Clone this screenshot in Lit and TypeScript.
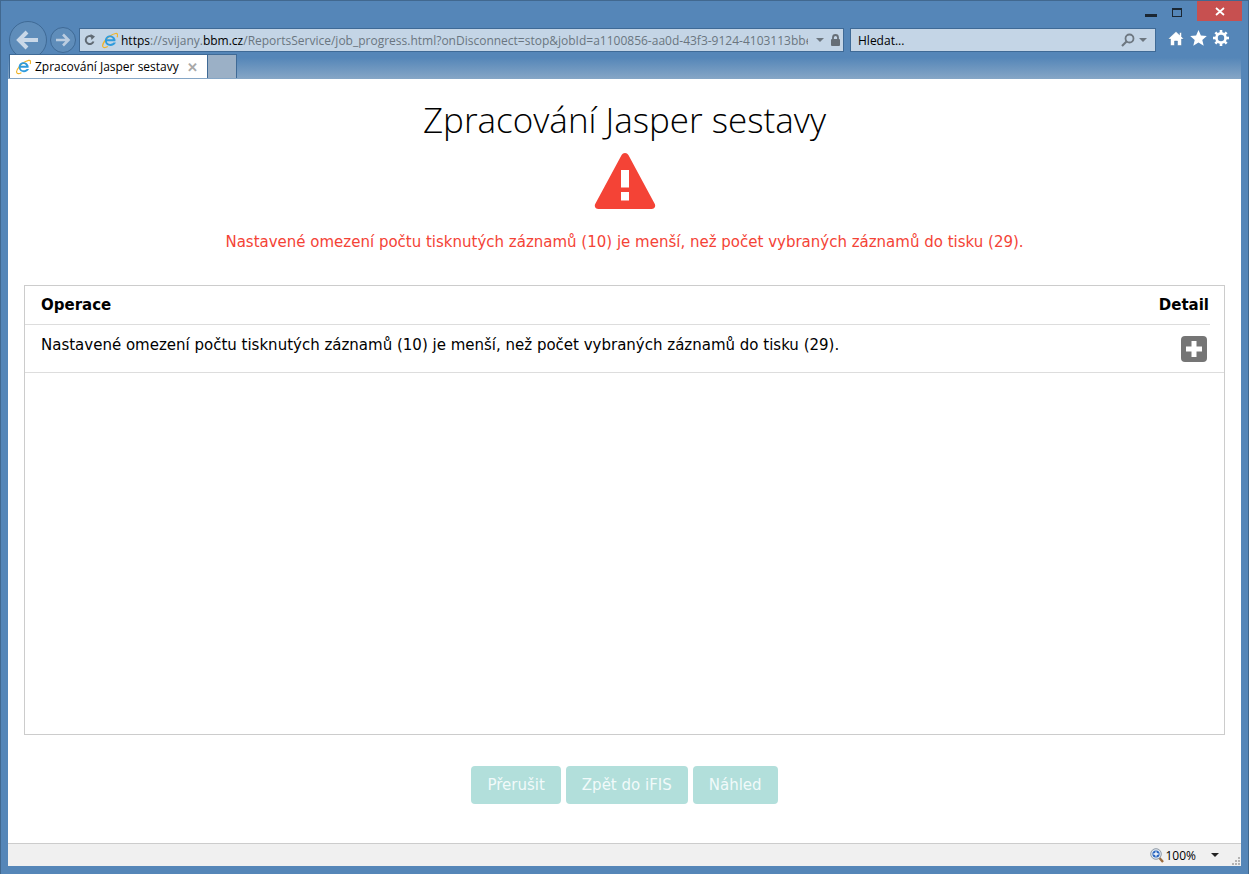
import { LitElement, html, css, svg } from "lit";
import { customElement } from "lit/decorators.js";

const ieLogo = (s: number) => html`<svg width=${s} height=${s} viewBox="0 0 18 18" class="ie">
  <path d="M2.2 15.6C.2 13.2 7 3.6 15.4 1.6c2.2-.4 2.8 1.4 1.6 4" fill="none" stroke="#f0b429" stroke-width="1.3"/>
  <path d="M2.2 15.6c1 1.6 3.6.6 5-.2" fill="none" stroke="#f0b429" stroke-width="1.3"/>
  <path d="M14.6 9.8H6.2c.2 3 4.6 4 7 1.4h2.6c-2 5-11 5-11.6-1.6C3.6 3 13 1.600 15.200 7.600c.2.7.2 1.400 0 2.200zM6.300 7.600h6.300c-.7-2.600-5.400-2.600-6.300 0z" fill="#2f9bdc" fill-rule="evenodd"/>
</svg>`;

@customElement("app-root")
export class AppRoot extends LitElement {
  static styles = css`
    :host { display: block; width: 1249px; height: 874px; overflow: hidden; }
    * { box-sizing: border-box; }
    .window {
      width: 1249px; height: 874px; display: flex; flex-direction: column;
      background: #5586b8; border: 1px solid #41688f; border-bottom: 0;
      font-family: "Open Sans", "Noto Sans", sans-serif; padding: 0 7px 8px 7px;
    }
    .caption { height: 20px; display: flex; justify-content: flex-end; margin-right: -1px; flex: none; }
    .cap-btn { display: flex; align-items: center; justify-content: center; }
    .min { width: 27px; padding-top: 8px; }
    .max { width: 26px; padding-top: 2px; margin-right: 7px; }
    .close { width: 45px; background: #c75050; }
    .nav { height: 33px; display: flex; flex: none; align-items: flex-start; padding-left: 1px; }
    .round { display: flex; align-items: center; justify-content: center; border: 1px solid #3f6a96; border-radius: 50%; flex: none; }
    .back { width: 38px; height: 38px; margin-top: 0; background: #5f8dba; }
    .fwd { width: 26px; height: 26px; margin: 6px 3px 0 3px; background: #5f8dba; }
    .field {
      margin-top: 7px; height: 24px; background: #c4d5e6; border: 1px solid #3f6a96;
      display: flex; align-items: center; font-size: 12px; color: #000; flex: none;
    }
    .addr { width: 765px; padding: 0 2px 0 4px; }
    .addr .ie { margin: 0 3px 0 5px; flex: none; }
    .url { flex: 1; overflow: hidden; white-space: nowrap; color: #6a7580; font-size: 12px; letter-spacing: 0; }
    .url b { font-weight: 400; color: #000; }
    .dd { width: 0; height: 0; border: 4px solid transparent; border-top-color: #6d7780; border-bottom: 0; flex: none; }
    .addr .dd { margin: 0 6px 0 8px; }
    .search { width: 306px; margin-left: 6px; padding: 0 8px 0 7px; justify-content: space-between; }
    .search span { font-size: 12px; }
    .search-ico { display: flex; align-items: center; gap: 4px; }
    .tools { display: flex; gap: 6px; margin: 9px 0 0 12px; align-items: center; }
    .tabs { height: 25px; flex: none; display: flex; padding-left: 1px; position: relative;
      background: linear-gradient(#5586b8 0%, #5586b8 15%, #86a6c6 100%); margin: 0 0 0 0; }
    .tab {
      width: 199px; height: 24px; background: #fff; border: 1px solid #3f6a96; border-bottom: 0;
      display: flex; align-items: center; padding: 0 9px 0 5px; font-size: 12px; color: #000;
    }
    .tab span { flex: 1; margin-left: 4px; white-space: nowrap; }
    .tab-x { color: #a8a8a8; font-size: 13px; font-weight: 700; }
    .newtab { width: 29px; height: 24px; background: #9bb0c6; border: 1px solid #3f6a96; border-left: 0; border-bottom: 0; }
    .page { flex: 1; background: #fff; display: flex; flex-direction: column; align-items: center; min-height: 0; position: relative; }
    h1 {
      margin: 17px 0 0 0; font-family: "Open Sans", "Noto Sans", sans-serif; font-weight: 300;
      font-size: 35px; line-height: 48px; color: #000; white-space: nowrap;
    }
    .warn { display: block; margin-top: 8px; }
    .msg { margin-top: 20px; color: #f44336; font-family: "DejaVu Sans", sans-serif; font-size: 15px; line-height: 24px; white-space: nowrap; }
    .box {
      width: 1201px; margin-top: 31px; height: 450px; border: 1px solid #ccc; flex: none;
      font-family: "DejaVu Sans", sans-serif; font-size: 15px; color: #000;
    }
    .head {
      height: 39px; margin-right: 14px; padding: 0 1px 0 16px; display: flex; justify-content: space-between; align-items: center;
      border-bottom: 1px solid #ddd; font-weight: 700;
    }
    .row { height: 48px; padding: 0 17px 0 16px; display: flex; justify-content: space-between; align-items: flex-start; border-bottom: 1px solid #ddd; }
    .row span { margin-top: 10px; line-height: 20px; white-space: nowrap; }
    .plus { margin-top: 11px; display: block; }
    .btns { display: flex; gap: 5px; margin-top: 31px; }
    .btn {
      height: 38px; padding: 0 16px; border: 0; border-radius: 4px; background: #b2dfdb; color: #f1fafa;
      font-family: "DejaVu Sans", sans-serif; font-size: 15px; display: flex; align-items: center;
    }
    .status {
      height: 23px; flex: none; background: #f0f0f0; border-top: 1px solid #ccc; display: flex; align-items: center;
      justify-content: flex-end; font-size: 12px; color: #000;
    }
    .status span { margin: 0 15px 0 1px; }
    .status .dd { border-top-color: #222; margin-right: 22px; }
    .grip { position: absolute; right: 0; bottom: 0; }
    .status-wrap { position: relative; flex: none; }
  `;

  render() {
    return html`<div class="window">
      <div class="caption">
        <div class="cap-btn min"><svg width="12" height="3"><rect width="12" height="3" fill="#1b2733"/></svg></div>
        <div class="cap-btn max"><svg width="10" height="9"><rect x=".5" y=".5" width="9" height="8" fill="none" stroke="#1b2733"/><rect width="10" height="2" fill="#1b2733"/></svg></div>
        <div class="cap-btn close"><svg width="10" height="9"><path d="M1 1l8 7M9 1L1 8" stroke="#fff" stroke-width="1.800"/></svg></div>
      </div>
      <div class="nav">
        <div class="round back"><svg width="24" height="20" viewBox="0 0 24 20"><path d="M11 2L3 10l8 8M3 10h19" fill="none" stroke="#c9d8e8" stroke-width="4"/></svg></div>
        <div class="round fwd"><svg width="16" height="14" viewBox="0 0 16 14"><path d="M8 1.500L13.500 7 8 12.500M13 7H1" fill="none" stroke="#bccde0" stroke-width="2.600"/></svg></div>
        <div class="field addr">
          <svg width="12" height="12" viewBox="0 0 12 12"><path d="M9.500 7.500A4 4 0 1 1 8 2.700" fill="none" stroke="#606a74" stroke-width="2"/><path d="M6.500 0l4.500 2.500L7.500 6z" fill="#606a74"/></svg>
          ${ieLogo(17)}
          <div class="url"><b>https</b>://svijany.<b>bbm.cz</b>/ReportsService/job_progress.html?onDisconnect=stop&amp;jobId=a1100856-aa0d-43f3-9124-4103113bbef3&amp;al</div>
          <div class="dd"></div>
          <svg width="11" height="12" viewBox="0 0 11 12"><path d="M3 5V3.500a2.500 2.500 0 0 1 5 0V5" fill="none" stroke="#666e76" stroke-width="1.800"/><rect x="1" y="5" width="9" height="7" rx="1" fill="#666e76"/></svg>
        </div>
        <div class="field search">
          <span>Hledat...</span>
          <div class="search-ico">
            <svg width="14" height="14" viewBox="0 0 14 14"><circle cx="8.500" cy="5.500" r="4" fill="none" stroke="#6d7780" stroke-width="1.800"/><path d="M5.500 8.500L1 13" stroke="#6d7780" stroke-width="2.200"/></svg>
            <div class="dd"></div>
          </div>
        </div>
        <div class="tools">
          <svg width="16" height="15" viewBox="0 0 16 15"><path d="M8 .500L0 8h2.500v6.500h4V10h3v4.500h4V8H16l-2.500-2.300V1.500h-2v2.300z" fill="#fff" stroke="#3f6a96" stroke-width=".4"/></svg>
          <svg width="17" height="16" viewBox="0 0 17 16"><path d="M8.500 0l2.400 5.500 5.900.5-4.500 3.900 1.400 5.900-5.200-3.200-5.200 3.200 1.400-5.900L.2 6l5.900-.5z" fill="#fff"/></svg>
          <svg width="16" height="16" viewBox="0 0 16 16"><circle cx="8" cy="8" r="4.600" fill="none" stroke="#fff" stroke-width="2.600"/><g stroke="#fff" stroke-width="2.600">${[0, 45, 90, 135].map((a) => svg`<path d="M8 0v16" transform="rotate(${a} 8 8)"/>`)}</g><circle cx="8" cy="8" r="3.200" fill="#5586b8"/></svg>
        </div>
      </div>
      <div class="tabs">
        <div class="tab">${ieLogo(16)}<span>Zpracování Jasper sestavy</span><div class="tab-x">✕</div></div>
        <div class="newtab"></div>
      </div>
      <div class="page">
        <h1>Zpracování Jasper sestavy</h1>
        <svg class="warn" width="62" height="58" viewBox="0 0 62 58"><path fill="#f44336" fill-rule="evenodd" d="M31 1c1.500 0 2.600.8 3.400 2.100l26.400 49c1.100 2.300-.2 4.900-3 4.900H4.200c-2.800 0-4.100-2.600-3-4.900l26.400-49C28.400 1.800 29.500 1 31 1zM27 18v17.500h8V18zM27 40v8.500h8V40z"/></svg>
        <div class="msg">Nastavené omezení počtu tisknutých záznamů (10) je menší, než počet vybraných záznamů do tisku (29).</div>
        <div class="box">
          <div class="head"><div>Operace</div><div>Detail</div></div>
          <div class="row">
            <span>Nastavené omezení počtu tisknutých záznamů (10) je menší, než počet vybraných záznamů do tisku (29).</span>
            <svg class="plus" width="26" height="26" viewBox="0 0 26 26"><rect width="26" height="26" rx="4" fill="#757575"/><path d="M13 5v16M5 13h16" stroke="#fff" stroke-width="5"/></svg>
          </div>
        </div>
        <div class="btns">
          <div class="btn">Přerušit</div>
          <div class="btn">Zpět do iFIS</div>
          <div class="btn">Náhled</div>
        </div>
      </div>
      <div class="status-wrap">
        <div class="status">
          <svg width="14" height="15" viewBox="0 0 14 15"><path d="M9 9.500l4 4.500" stroke="#9a6a3c" stroke-width="2.400"/><circle cx="6" cy="6" r="5.300" fill="#dfe8f2" stroke="#8f9aa6"/><circle cx="6" cy="6" r="3.600" fill="#2a66c0"/><path d="M6 3.500v5M3.500 6h5" stroke="#fff" stroke-width="1.300"/></svg>
          <span>100%</span>
          <div class="dd"></div>
        </div>
        <svg class="grip" width="10" height="10" viewBox="0 0 10 10" fill="#b4b4b4"><rect x="7" y="1" width="2" height="2"/><rect x="4" y="4" width="2" height="2"/><rect x="7" y="4" width="2" height="2"/><rect x="1" y="7" width="2" height="2"/><rect x="4" y="7" width="2" height="2"/><rect x="7" y="7" width="2" height="2"/></svg>
      </div>
    </div>`;
  }
}
